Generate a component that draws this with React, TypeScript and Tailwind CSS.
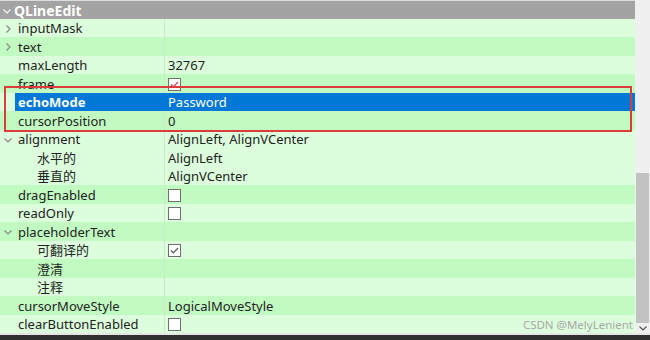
import React from "react";

type Row = {
  name: string;
  value?: string;
  check?: "on" | "off" | "red";
  level?: 0 | 1;
  arrow?: "right" | "down";
  dark?: boolean;
  selected?: boolean;
};

const rows: Row[] = [
  { name: "inputMask", arrow: "right" },
  { name: "text", arrow: "right", dark: true },
  { name: "maxLength", value: "32767" },
  { name: "frame", check: "red", dark: true },
  { name: "echoMode", value: "Password", selected: true },
  { name: "cursorPosition", value: "0", dark: true },
  { name: "alignment", value: "AlignLeft, AlignVCenter", arrow: "down" },
  { name: "水平的", value: "AlignLeft", level: 1 },
  { name: "垂直的", value: "AlignVCenter", level: 1 },
  { name: "dragEnabled", check: "off", dark: true },
  { name: "readOnly", check: "off" },
  { name: "placeholderText", arrow: "down", dark: true },
  { name: "可翻译的", check: "on", level: 1 },
  { name: "澄清", level: 1, dark: true },
  { name: "注释", level: 1 },
  { name: "cursorMoveStyle", value: "LogicalMoveStyle", dark: true },
  { name: "clearButtonEnabled", check: "off" },
];

function Chevron({ dir, color }: { dir: "right" | "down"; color: string }) {
  return (
    <svg viewBox="0 0 10 10" className="w-[10px] h-[10px]" aria-hidden="true">
      <path
        d={dir === "right" ? "M3.5 1.5l3.5 3.5-3.5 3.5" : "M1.5 3.5l3.5 3.5 3.5-3.5"}
        fill="none"
        stroke={color}
        strokeWidth="1.2"
      />
    </svg>
  );
}

function Checkbox({ state }: { state: "on" | "off" | "red" }) {
  return (
    <div className="w-[13px] h-[13px] bg-white border border-[#6f6f6f] flex items-center justify-center">
      {state !== "off" && (
        <svg viewBox="0 0 11 11" className="w-[11px] h-[11px]" aria-hidden="true">
          <path
            d="M2 5.5l2.3 2.3L9 3"
            fill="none"
            stroke={state === "red" ? "#d8404a" : "#555"}
            strokeWidth="1.2"
          />
        </svg>
      )}
    </div>
  );
}

export default function App() {
  return (
    <div
      className="w-[650px] h-[340px] flex flex-col bg-[#f0f0f0] text-[13px] text-[#222] relative overflow-hidden"
      style={{ fontFamily: '"Noto Sans", "Noto Sans CJK SC", sans-serif' }}
    >
      <div className="flex h-[333px]">
        <div className="w-[635px] flex flex-col">
          <div className="h-[19px] bg-[#a3a3a3] border-t border-[#dcdcdc] flex items-center gap-[2px] pl-[2px] pt-[2px] text-white text-[14px] font-bold">
            <Chevron dir="down" color="#f4f4f4" />
            <span className="leading-none">QLineEdit</span>
          </div>
          {rows.map((r) => (
            <div
              key={r.name}
              className={`h-[18.5px] flex ${r.dark ? "bg-[#c2fbc2]" : "bg-[#ddfedd]"}`}
            >
              <div className="w-[15px] shrink-0 flex items-center justify-center pt-[2px]">
                {r.arrow && <Chevron dir={r.arrow} color="#8a8a8a" />}
              </div>
              <div className={`flex flex-1 ${r.selected ? "bg-[#0078d7] text-white" : ""}`}>
                <div
                  className={`w-[149px] flex items-center whitespace-nowrap pt-[2px] ${
                    r.level === 1 ? "pl-[22px]" : "pl-[3px]"
                  } ${r.selected ? "font-bold" : ""}`}
                >
                  {r.name}
                </div>
                <div className={`w-px ${r.selected ? "" : "bg-[#cfe6cf]"}`} />
                <div className="flex-1 flex items-center pl-[3px] pt-[2px] whitespace-nowrap">
                  {r.check ? <Checkbox state={r.check} /> : r.value}
                </div>
              </div>
            </div>
          ))}
        </div>
        <div className="w-[15px] flex flex-col">
          <div className="h-[173px]" />
          <div className="flex-1 bg-[#c2c2c2] mx-px" />
          <div className="h-[10px] flex items-center justify-center">
            <Chevron dir="down" color="#555" />
          </div>
        </div>
      </div>
      <div className="h-[2px] bg-[#e6e6e6]" />
      <div className="flex-1 bg-[#303030]" />

      <div className="absolute left-[4px] top-[86px] w-[628px] h-[46px] border-2 border-[#dc3c3c]" />
      <div className="absolute right-[17px] top-[319px] text-[11.5px] text-[#a6a6a6] leading-none whitespace-nowrap">
        CSDN @MelyLenient
      </div>
    </div>
  );
}
